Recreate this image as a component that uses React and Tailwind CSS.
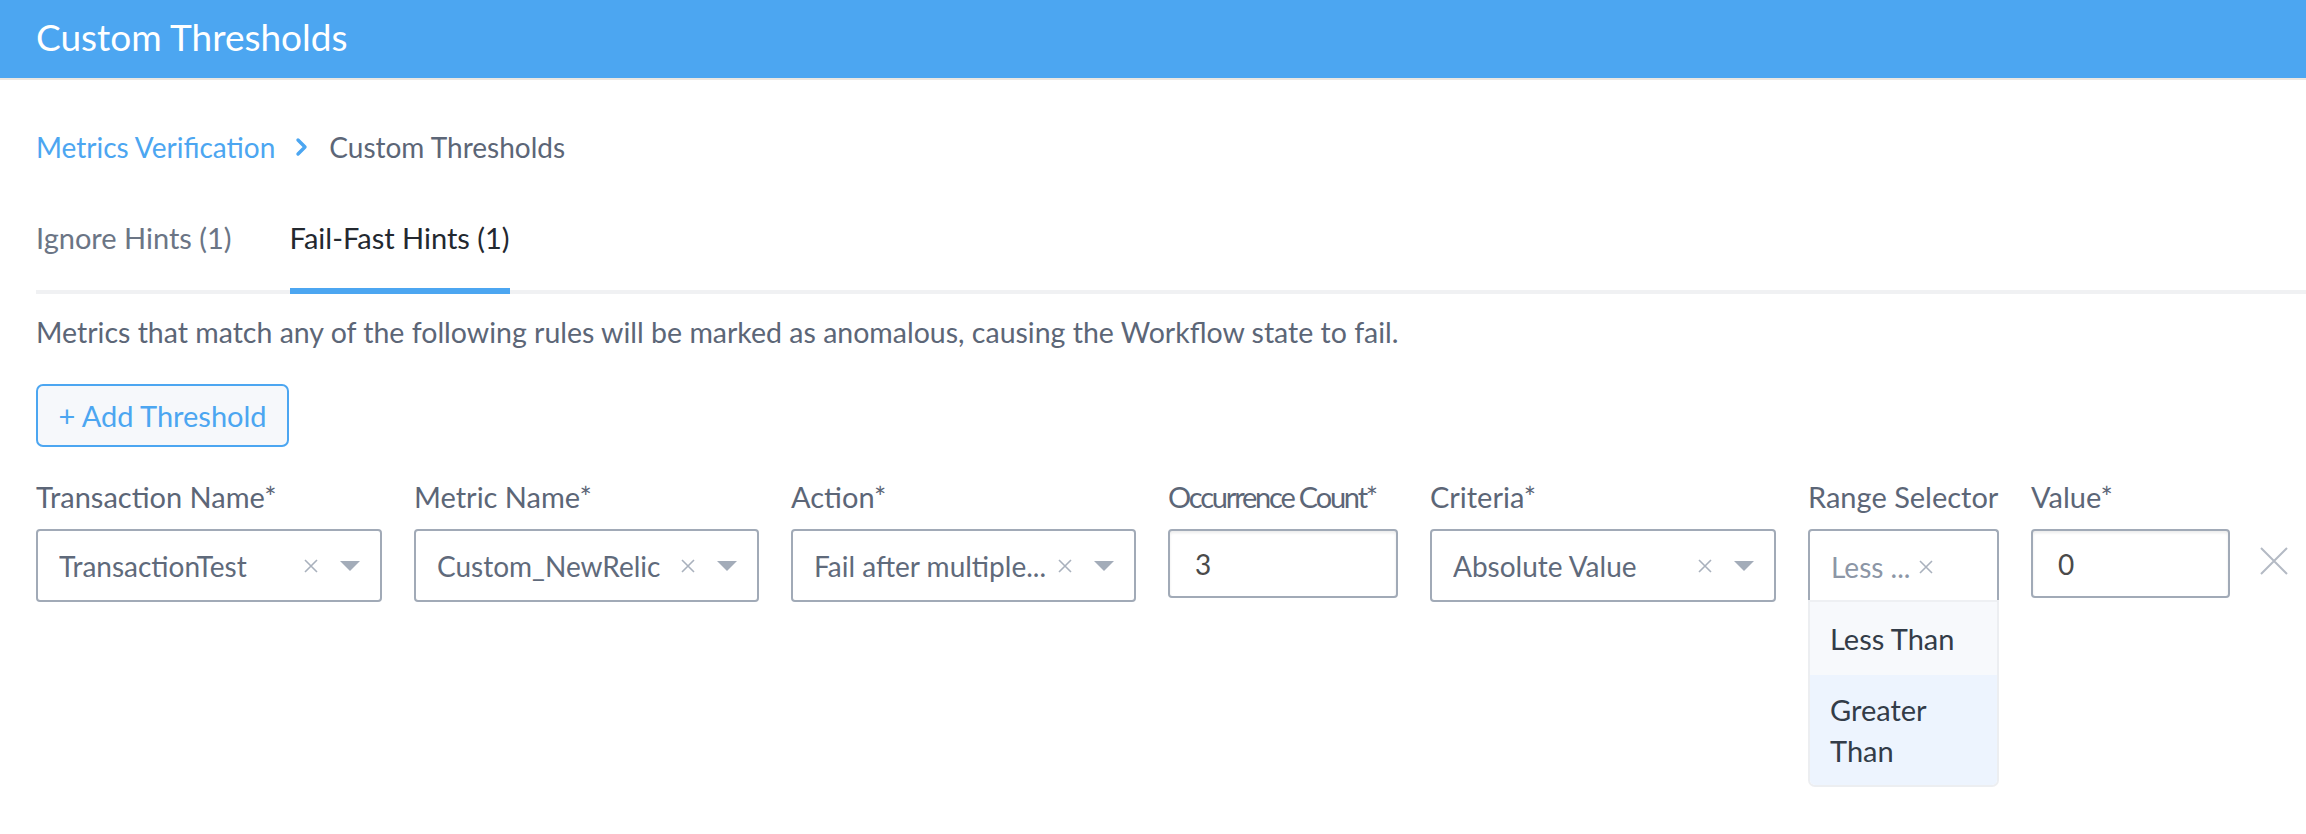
import React from 'react';

function ClearIcon({ className = '' }) {
    return (
        <svg width="16" height="16" viewBox="0 0 16 16" className={className}>
            <path d="M2 2 L14 14 M14 2 L2 14" stroke="#a9b1bd" strokeWidth="1.6" fill="none" />
        </svg>
    );
}

function CaretIcon() {
    return (
        <svg width="20" height="10" viewBox="0 0 20 10" className="shrink-0">
            <polygon points="0,0 20,0 10,10" fill="#a3acb9" />
        </svg>
    );
}

function SelectBox({ value, width }) {
    return (
        <div className={`${width} h-[73px] flex items-center bg-white border-2 border-[#a1aab7] rounded-[4px] pl-[21px] pr-[20px]`}>
            <span className="flex-1 min-w-0 truncate text-[#5f6a7b]">{value}</span>
            <ClearIcon className="shrink-0 ml-[10px]" />
            <span className="ml-[21px]"><CaretIcon /></span>
        </div>
    );
}

function Field({ label, labelClass = '', children }) {
    return (
        <div className="flex flex-col">
            <label className={`h-[40px] leading-[40px] text-[29px] text-[#5c6677] whitespace-nowrap ${labelClass}`}>{label}</label>
            <div className="mt-[12px] relative">{children}</div>
        </div>
    );
}

export default function App() {
    return (
        <div className="min-h-[834px] bg-white font-['Lato',sans-serif] text-[28px]">
            {/* Header */}
            <header className="h-[80px] bg-[#4ca6f1] border-b-2 border-[#ebe7e2] flex items-center pl-[36px] pb-[6px]">
                <h1 className="text-[37px] text-white leading-none">Custom Thresholds</h1>
            </header>

            <div className="pl-[36px]">
                {/* Breadcrumb */}
                <nav className="mt-[47px] h-[40px] leading-[40px] flex items-center">
                    <a className="text-[#4ca6f1]">Metrics Verification</a>
                    <svg width="14" height="20" viewBox="0 0 14 20" className="mx-[20px]">
                        <polyline points="3,3 10,10 3,17" stroke="#4ca6f1" strokeWidth="3.4" fill="none" strokeLinecap="round" strokeLinejoin="round" />
                    </svg>
                    <span className="text-[#5c6677]">Custom Thresholds</span>
                </nav>

                {/* Tabs */}
                <div className="mt-[51px] flex gap-[58px] border-b-4 border-[#f0f1f3] text-[29px]">
                    <button className="h-[76px] leading-[40px] pb-[36px] text-[#6b7585] -mb-[4px]">Ignore Hints (1)</button>
                    <button className="h-[76px] leading-[40px] pb-[30px] text-[#23282f] border-b-[6px] border-[#4ca6f1] -mb-[4px]">Fail-Fast Hints (1)</button>
                </div>

                <p className="mt-[18px] h-[40px] leading-[40px] text-[28.5px] text-[#5c6677] whitespace-nowrap">
                    Metrics that match any of the following rules will be marked as anomalous, causing the Workflow state to fail.
                </p>

                <button className="mt-[32px] w-[253px] h-[63px] rounded-[7px] border-2 border-[#4ca6f1] bg-[#f6f8fb] text-[29px] text-[#4ca6f1] flex items-center justify-center">
                    + Add Threshold
                </button>

                {/* Threshold row */}
                <div className="mt-[30px] flex items-start gap-[32px]">
                    <Field label="Transaction Name*">
                        <SelectBox width="w-[346px]" value="TransactionTest" />
                    </Field>
                    <Field label="Metric Name*">
                        <SelectBox width="w-[345px]" value="Custom_NewRelic" />
                    </Field>
                    <Field label="Action*">
                        <SelectBox width="w-[345px]" value="Fail after multiple..." />
                    </Field>
                    <Field label="Occurrence Count*" labelClass="tracking-[-2.2px]">
                        <input
                            type="text"
                            defaultValue="3"
                            className="w-[230px] h-[69px] border-2 border-[#a1aab7] rounded-[4px] px-[25px] text-[#4a4a4a] shadow-[inset_0_2px_3px_rgba(0,0,0,0.08)] outline-none"
                        />
                    </Field>
                    <Field label="Criteria*">
                        <SelectBox width="w-[346px]" value="Absolute Value" />
                    </Field>
                    <Field label="Range Selector">
                        <div className="w-[191px] h-[73px] flex items-center bg-white border-2 border-b-0 border-[#a1aab7] rounded-t-[4px] pl-[21px]">
                            <span className="whitespace-nowrap text-[#8c96a6]">Less ...</span>
                            <ClearIcon className="shrink-0 ml-[8px]" />
                        </div>
                        <ul className="absolute left-0 top-[71px] w-[191px] bg-white border-2 border-t-0 border-[#eceef1] rounded-b-[7px] overflow-hidden text-[29px] text-[#333c48]">
                            <li className="bg-[#f7f9fc] px-[20px] py-[16px] leading-[41px] border-t-2 border-[#eef0f3]">Less Than</li>
                            <li className="bg-[#edf4fe] px-[20px] py-[14px] leading-[41px]">Greater Than</li>
                        </ul>
                    </Field>
                    <Field label="Value*">
                        <input
                            type="text"
                            defaultValue="0"
                            className="w-[199px] h-[69px] border-2 border-[#a1aab7] rounded-[4px] px-[25px] text-[#4a4a4a] shadow-[inset_0_2px_3px_rgba(0,0,0,0.08)] outline-none"
                        />
                    </Field>
                    <button className="mt-[70px] -ml-[2px] text-[#b4bac4]">
                        <svg width="28" height="28" viewBox="0 0 28 28">
                            <path d="M1 1 L27 27 M27 1 L1 27" stroke="#b4bac4" strokeWidth="2" fill="none" />
                        </svg>
                    </button>
                </div>
            </div>
        </div>
    );
}
